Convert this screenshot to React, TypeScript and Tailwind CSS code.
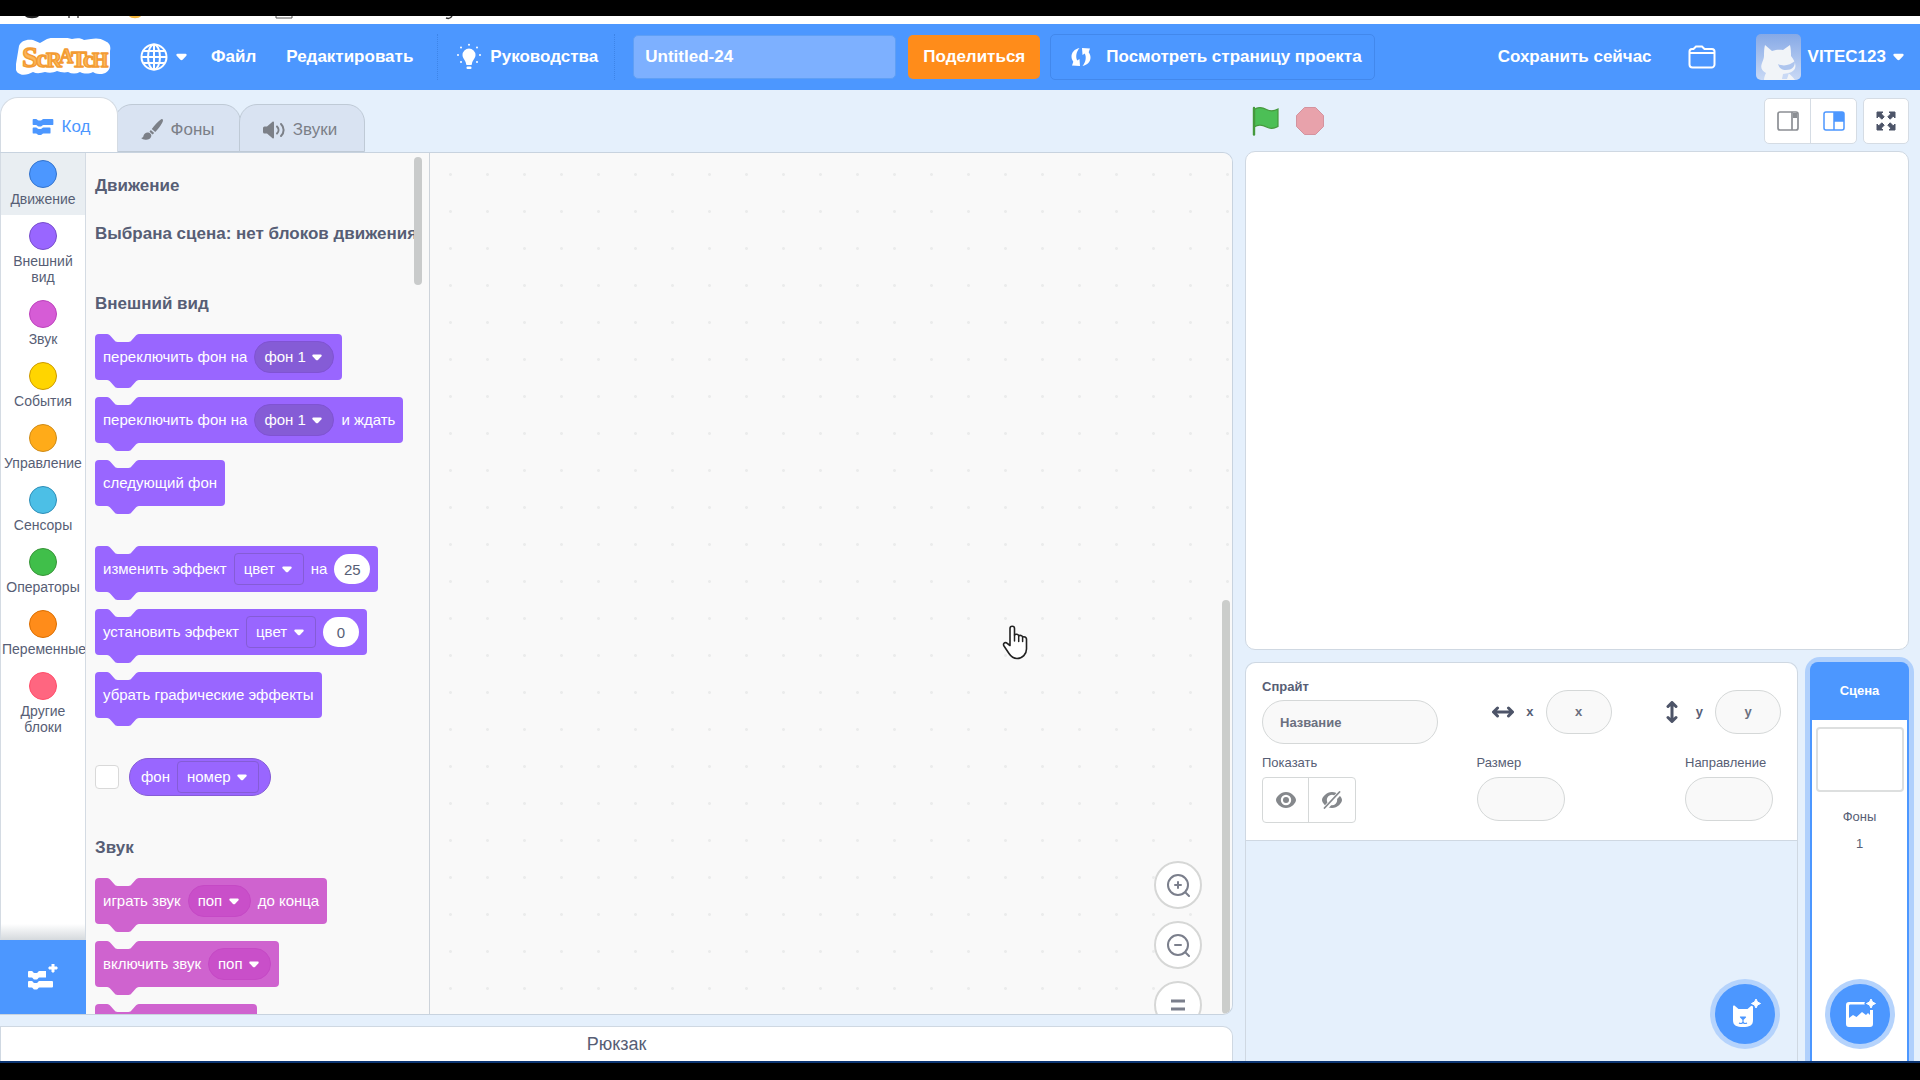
import type { ReactNode } from "react";

type Category = { name: string; color: string; active?: boolean };

const categories: Category[] = [
  { name: "Движение", color: "bg-[#4c97ff] border-[#3373cc]", active: true },
  { name: "Внешний вид", color: "bg-[#9966ff] border-[#774dcb]" },
  { name: "Звук", color: "bg-[#d65cd6] border-[#bd42bd]" },
  { name: "События", color: "bg-[#ffd500] border-[#cc9900]" },
  { name: "Управление", color: "bg-[#ffab19] border-[#cf8b17]" },
  { name: "Сенсоры", color: "bg-[#4cbfe6] border-[#2e8eb8]" },
  { name: "Операторы", color: "bg-[#40bf4a] border-[#389438]" },
  { name: "Переменные", color: "bg-[#ff8c1a] border-[#db6e00]" },
  { name: "Другие блоки", color: "bg-[#ff6680] border-[#ff4d6a]" },
];

const NOTCH = "M0 0c2 0 3 1 4 2l4 4c1 1 2 2 4 2h12c2 0 3-1 4-2l4-4c1-1 2-2 4-2z";

function Caret({ className }: { className?: string }) {
  return (
    <svg viewBox="0 0 12 8" className={className} fill="currentColor">
      <path d="M1.600.5h8.800c1.200 0 1.600 1.200.9 2L7.200 6.900c-.7.7-1.700.7-2.400 0L.7 2.500C0 1.700.400.500 1.600.5z" />
    </svg>
  );
}

function Block({ tone = "looks", children }: { tone?: "looks" | "sound"; children?: ReactNode }) {
  const looks = tone === "looks";
  return (
    <div
      className={
        "relative flex h-[46px] w-fit items-center gap-[7px] rounded px-2 text-[15px] text-white " +
        (looks ? "bg-[#9966ff]" : "bg-[#cf63cf]")
      }
    >
      <svg viewBox="0 0 36 8" className="absolute left-3 top-0 h-2 w-8 text-[#f9f9f9]" preserveAspectRatio="none">
        <path d={NOTCH} fill="currentColor" />
      </svg>
      <svg
        viewBox="0 0 36 8"
        className={"absolute left-3 top-full h-2 w-8 " + (looks ? "text-[#9966ff]" : "text-[#cf63cf]")}
        preserveAspectRatio="none"
      >
        <path d={NOTCH} fill="currentColor" />
      </svg>
      {children}
    </div>
  );
}

type MenuProps = { label: string; value: string; kind?: "round" | "square" | "sound" };

function Menu({ label, value, kind = "round" }: MenuProps) {
  const look = {
    round: "rounded-full bg-[#855cd6] border-[#8053d3]",
    square: "rounded bg-[#9966ff] border-[#855cd6]",
    sound: "rounded-full bg-[#c94fc9] border-[#c549c5]",
  }[kind];
  return (
    <span className="relative flex items-center">
      <select
        aria-label={label}
        className={"h-8 appearance-none border pl-[9px] pr-[27px] text-[15px] text-white outline-none " + look}
      >
        <option>{value}</option>
      </select>
      <Caret className="pointer-events-none absolute right-3 h-[7px] w-[10px]" />
    </span>
  );
}

function NumberField({ label, value }: { label: string; value: string }) {
  return (
    <input
      aria-label={label}
      defaultValue={value}
      className="h-[30px] w-9 rounded-full bg-white text-center text-[15px] text-[#575e75] outline-none"
    />
  );
}

function Header() {
  return (
    <header className="flex h-[66px] shrink-0 items-center bg-[#4c97ff] text-[17px] font-bold text-white">
      <svg viewBox="0 0 96 38" className="ml-4 h-[38px] w-24" aria-label="Scratch">
        <path
          d="M3 8C5 3 10 1 17 2l7 3 7-4c5-2 9-1 12-1 5-1 9 0 13 1 5-1 9-1 12 1l7-1c4-1 10-1 14 2 5 2 6 6 5 10v14c0 5-3 8-8 9-4 0-6 0-9-2-4 2-9 2-13 0-4 2-8 2-12 0-4 1-8 0-11-1-4 2-8 2-12 1-4 1-8 2-12 0-4 2-9 4-13 2-4-1-5-5-4-10z"
          fill="#fff"
        />
        <text
          y="29"
          fontFamily="'Liberation Serif', serif"
          fontWeight="700"
          fill="#fbb65a"
          stroke="#f39b32"
          strokeWidth="1.400"
          strokeLinejoin="round"
        >
          <tspan x="6" fontSize="29">S</tspan>
          <tspan x="20" fontSize="25">c</tspan>
          <tspan x="30" fontSize="22">R</tspan>
          <tspan x="43" y="25" fontSize="20">A</tspan>
          <tspan x="55" y="29" fontSize="24">T</tspan>
          <tspan x="67" fontSize="24">c</tspan>
          <tspan x="76" fontSize="21">H</tspan>
        </text>
      </svg>
      <button className="ml-7 flex items-center gap-2" aria-label="Язык">
        <svg viewBox="0 0 28 28" className="size-7" fill="none" stroke="currentColor" strokeWidth="2">
          <circle cx="14" cy="14" r="12.500" />
          <ellipse cx="14" cy="14" rx="6" ry="12.500" />
          <path d="M14 1.500v25M1.500 14h25M3.500 8h21M3.500 20h21" />
        </svg>
        <Caret className="h-2 w-[11px]" />
      </button>
      <button className="ml-6">Файл</button>
      <button className="ml-[30px]">Редактировать</button>
      <div className="ml-6 h-[46px] border-l border-dotted border-[#3d84e8]" />
      <button className="ml-[18px] flex items-center gap-2">
        <svg viewBox="0 0 26 28" className="h-7 w-[26px]" fill="currentColor">
          <path d="M13 5.500a6.500 6.500 0 0 0-6.500 6.500c0 3.500 3 5 3.500 8.500 0 1 .5 1.500 1.500 1.500h3c1 0 1.500-.5 1.500-1.500.5-3.500 3.500-5 3.500-8.500A6.500 6.500 0 0 0 13 5.500z" />
          <rect x="10.500" y="23.500" width="5" height="2.500" rx="1" />
          <circle cx="13" cy="1.800" r="1" />
          <circle cx="5" cy="4.500" r="1" />
          <circle cx="21" cy="4.500" r="1" />
          <circle cx="2" cy="12" r="1" />
          <circle cx="24" cy="12" r="1" />
          <circle cx="5" cy="19" r="1" />
          <circle cx="21" cy="19" r="1" />
        </svg>
        Руководства
      </button>
      <div className="ml-4 h-[46px] border-l border-dotted border-[#3d84e8]" />
      <input
        aria-label="Название проекта"
        defaultValue="Untitled-24"
        className="ml-[18px] h-11 w-[263px] rounded-[5px] border border-[#5f9ff5] bg-[#7db0ff] px-[11px] text-[17px] font-bold text-white outline-none"
      />
      <button className="ml-3 h-11 rounded-[5px] bg-[#ff8c1a] px-[15px]">Поделиться</button>
      <button className="ml-[10px] flex h-[46px] items-center gap-[15px] rounded-[5px] border border-[#4288ec] pl-5 pr-3">
        <svg viewBox="0 0 20 18" className="h-[18px] w-5" fill="currentColor">
          <path d="M8.500 0C3.500 1 .5 4.500.5 8.500c0 2 .7 3.700 1.800 5.200L1 17.500l8 .5-.5-7-2.300 1.500C4.500 9 5 4 8.500 0zM11.500 18c5-1 8-4.500 8-8.500 0-2-.7-3.700-1.800-5.200L19 .5 11 0l.5 7 2.300-1.500c1.700 3.500 1.200 8.500-2.300 12.500z" />
        </svg>
        Посмотреть страницу проекта
      </button>
      <button className="ml-auto">Сохранить сейчас</button>
      <button className="ml-9" aria-label="Мои работы">
        <svg viewBox="0 0 28 24" className="h-6 w-7" fill="none" stroke="currentColor" strokeWidth="2">
          <path d="M1.500 8h25v11.500a3 3 0 0 1-3 3h-19a3 3 0 0 1-3-3zM1.500 8V6.500c0-1.500 1-2.500 2.500-2.500h1.500L8 1.500h6L16.500 4H24c1.500 0 2.500 1 2.500 2.500V8" />
        </svg>
      </button>
      <button className="ml-10 mr-4 flex items-center gap-[7px]">
        <svg viewBox="0 0 45 46" className="h-[46px] w-[45px] rounded-[5px]">
          <defs>
            <linearGradient id="sky" x1="0" y1="0" x2="0" y2="1">
              <stop offset="0" stopColor="#86a9e6" />
              <stop offset="1" stopColor="#c9d9f5" />
            </linearGradient>
          </defs>
          <rect width="45" height="46" fill="url(#sky)" />
          <path
            d="M9 11l7 6c4-1.500 8-1.500 11-1l7-5c1 4 1 8 1 11 4 5 6 10 3 14-2 2-4 3-6 3 3 2 5 4 7 7H8c0-3 1-5 2-7-4-2-6-5-4-10 1-3 2-5 2-7 0-4 0-7 1-11z"
            fill="#f1f4f8"
          />
          <path d="M22 30c6 3 12 1 17-3 0 6-3 9-9 9-4 0-7-2-8-6z" fill="#aec5ee" />
          <path d="M27 40l6-1-2 6h-5z" fill="#c9d9f5" />
        </svg>
        VITEC123
        <Caret className="h-2 w-[11px]" />
      </button>
    </header>
  );
}

function CodeIcon({ className }: { className?: string }) {
  return (
    <svg viewBox="0 0 22 17" className={className} fill="currentColor">
      <path d="M1 0h2.500C5 0 5 1.500 6.500 1.500h2C10 1.500 10 0 11.500 0H21a1 1 0 0 1 1 1v4.500a1 1 0 0 1-1 1h-9.500C10 6.500 10 8 8.500 8h-2C5 8 5 6.500 3.500 6.500H1a1 1 0 0 1-1-1V1a1 1 0 0 1 1-1z" />
      <path d="M1 9h2.500C5 9 5 10.500 6.500 10.500h2C10 10.500 10 9 11.500 9H18a1 1 0 0 1 1 1v4.500a1 1 0 0 1-1 1h-6.500c-1.500 0-1.500 1.500-3 1.500h-2C5 17 5 15.500 3.500 15.500H1a1 1 0 0 1-1-1V10a1 1 0 0 1 1-1z" />
    </svg>
  );
}

function Tabs() {
  return (
    <div className="flex h-[55px] shrink-0 items-end text-[17px] text-[#7c8088]">
      <button className="z-10 flex h-[55px] w-[118px] items-center justify-center gap-2 rounded-t-[18px] border border-b-0 border-[#d4dbe3] bg-white pl-1 pt-[3px] text-[#4c97ff]">
        <CodeIcon className="h-4 w-[22px]" />
        Код
      </button>
      <button className="-ml-1 flex h-12 w-[127px] items-center justify-center gap-2 rounded-t-[18px] border border-[#bfcad6] bg-[#d9e3f2] pt-[3px]">
        <svg viewBox="0 0 22 21" className="h-[21px] w-[22px]" fill="#7c8088">
          <path d="M21.500.3c.8.700.500 2-.3 3.500-1.700 3.200-4.500 7-7 9.200L10.800 10C13.200 6.800 16.500 3 19.200 1c.9-.7 1.700-1.200 2.300-.7zM9.800 11l3.400 3-1.700 1.500-3-2.700zM7.500 13.500c2 .5 3.200 2 2.700 4-.7 2.700-3.500 3.500-6 3.200-1.600-.2-3-.7-4-1.700 1.500-.2 2-.8 2.300-2.200.5-2.300 2.700-3.800 5-3.300z" />
        </svg>
        Фоны
      </button>
      <button className="-ml-0.5 flex h-12 w-[126px] items-center justify-center gap-2 rounded-t-[18px] border border-[#bfcad6] bg-[#d9e3f2] pr-1 pt-[3px]">
        <svg viewBox="0 0 22 18" className="h-[18px] w-[22px]" fill="#7c8088">
          <path d="M1.500 5.500H4L9.500.7c.8-.6 1.500-.2 1.500.8v15c0 1-.7 1.400-1.500.8L4 12.500H1.500A1.500 1.500 0 0 1 0 11V7a1.500 1.500 0 0 1 1.500-1.500z" />
          <path d="M14 5.500c2 2 2 5 0 7M18 3c3.500 3.500 3.500 8.500 0 12" fill="none" stroke="#7c8088" strokeWidth="2" strokeLinecap="round" />
        </svg>
        Звуки
      </button>
    </div>
  );
}

function CategoryMenu() {
  return (
    <nav className="flex w-[86px] shrink-0 flex-col border-x border-[#d4dbe3] bg-white">
      <div className="min-h-0 flex-1 overflow-hidden">
        {categories.map((c) => (
          <button
            key={c.name}
            className={
              "block w-full overflow-hidden px-px pb-2 pt-[7px] text-center text-[14px] leading-4 text-[#575e75] " +
              (c.active ? "bg-[#e9eef2]" : "")
            }
          >
            <span className={"mx-auto mb-[3px] block size-7 rounded-full border " + c.color} />
            {c.name}
          </button>
        ))}
      </div>
      <div className="h-4 bg-linear-to-b from-white to-[#d5d9dd]" />
      <button aria-label="Добавить расширение" className="-mx-px flex h-[74px] items-center justify-center bg-[#4c97ff] text-white">
        <svg viewBox="0 0 30 26" className="h-[26px] w-[30px]" fill="currentColor">
          <path d="M1 7h2.500C5 7 5 9 6.500 9h2c1.500 0 1.500-2 3-2H18v6.500h-6.500c-1.500 0-1.500 2-3 2h-2c-1.500 0-1.500-2-3-2H1a1 1 0 0 1-1-1V8a1 1 0 0 1 1-1z" />
          <path d="M1 17h2.500C5 17 5 19 6.500 19h2c1.500 0 1.500-2 3-2H24a1 1 0 0 1 1 1v4.500a1 1 0 0 1-1 1H11.500c-1.500 0-1.500 2-3 2h-2c-1.500 0-1.500-2-3-2H1a1 1 0 0 1-1-1V18a1 1 0 0 1 1-1z" />
          <path d="M24 0h2v3h3v2h-3v3h-2V5h-3V3h3z" stroke="currentColor" strokeLinejoin="round" />
        </svg>
      </button>
    </nav>
  );
}

function Palette() {
  return (
    <div className="relative w-[344px] shrink-0 overflow-hidden border-r border-[#cdd3da] bg-[#f9f9f9] pl-[9px] text-[#575e75]">
      <h2 className="mt-[21px] text-[17px] font-bold leading-6">Движение</h2>
      <p className="mr-[6px] mt-6 overflow-hidden whitespace-nowrap text-[17px] font-bold leading-6">
        Выбрана сцена: нет блоков движения
      </p>
      <h2 className="mt-[46px] text-[17px] font-bold leading-6">Внешний вид</h2>
      <div className="mt-[18px] flex flex-col gap-[17px]">
        <Block>
          переключить фон на
          <Menu label="Фон" value="фон 1" />
        </Block>
        <Block>
          переключить фон на
          <Menu label="Фон" value="фон 1" />
          и ждать
        </Block>
        <Block>следующий фон</Block>
      </div>
      <div className="mt-10 flex flex-col gap-[17px]">
        <Block>
          изменить эффект
          <Menu label="Эффект" value="цвет" kind="square" />
          на
          <NumberField label="Изменить на" value="25" />
        </Block>
        <Block>
          установить эффект
          <Menu label="Эффект" value="цвет" kind="square" />
          <NumberField label="Значение" value="0" />
        </Block>
        <Block>убрать графические эффекты</Block>
      </div>
      <div className="mt-10 flex items-center gap-[10px]">
        <input
          type="checkbox"
          aria-label="Показать номер фона"
          className="size-6 appearance-none rounded border border-[#d9d9d9] bg-white"
        />
        <div className="flex h-[38px] items-center gap-[7px] rounded-full border border-[#855cd6] bg-[#9966ff] px-[11px] text-[15px] text-white">
          фон
          <Menu label="Свойство фона" value="номер" kind="square" />
        </div>
      </div>
      <h2 className="mt-10 text-[17px] font-bold leading-6">Звук</h2>
      <div className="mt-[18px] flex flex-col gap-[17px]">
        <Block tone="sound">
          играть звук
          <Menu label="Звук" value="поп" kind="sound" />
          до конца
        </Block>
        <Block tone="sound">
          включить звук
          <Menu label="Звук" value="поп" kind="sound" />
        </Block>
        <Block tone="sound">
          <span className="w-[146px]" />
        </Block>
      </div>
      <div className="absolute right-[7px] top-1 h-32 w-2 rounded-full bg-[#c9cbcb]" />
    </div>
  );
}

function ZoomButton({ label, children }: { label: string; children: ReactNode }) {
  return (
    <button
      aria-label={label}
      className="flex size-12 items-center justify-center rounded-full border-2 border-[#d6d7d6] bg-white text-[#7b7f8c]"
    >
      <svg viewBox="0 0 24 24" className="size-6" fill="none" stroke="currentColor" strokeWidth="2" strokeLinecap="round">
        {children}
      </svg>
    </button>
  );
}

function Workspace() {
  return (
    <div className="relative min-w-0 flex-1 overflow-hidden bg-[#f9f9f9] bg-[radial-gradient(circle,#ebecec_1px,transparent_2px)] bg-size-[37px_37px] [background-position:2px_3px]">
      <div className="absolute right-[30px] top-[708px] flex flex-col gap-3">
        <ZoomButton label="Увеличить">
          <circle cx="12" cy="12" r="10" />
          <path d="M19.500 19.500 23 23M12 9v6M9 12h6" />
        </ZoomButton>
        <ZoomButton label="Уменьшить">
          <circle cx="12" cy="12" r="10" />
          <path d="M19.500 19.500 23 23M9 12h6" />
        </ZoomButton>
        <ZoomButton label="Сбросить масштаб">
          <path d="M5 8h14M5 16h14" strokeLinecap="butt" strokeWidth="3" />
        </ZoomButton>
      </div>
      <div className="absolute bottom-0 right-[2px] h-[414px] w-2 rounded-full bg-[#cbcdcb]" />
      <svg viewBox="0 0 26 35" className="absolute left-[572px] top-[472px] h-[35px] w-[26px]">
        <path
          d="M8 20.500V3.500c0-3 4.500-3 4.500 0V10c1.200-1.300 3.800-.8 4.200.8 1.300-.9 3.500-.3 3.900 1.200 1.600-.7 3.600.2 3.900 2V24c0 5-4 9.500-9.500 9.500-3.500 0-6-2-8-5l-5-7.500c-1.300-2.300.500-4 2.500-3.200z"
          fill="#fff"
          stroke="#222"
          strokeWidth="1.600"
          strokeLinejoin="round"
        />
        <path d="M12.500 10v6M16.700 11v5.500M20.600 12.500v4" stroke="#222" strokeWidth="1.500" strokeLinecap="round" />
      </svg>
    </div>
  );
}

function StageHeader() {
  return (
    <div className="flex h-[61px] shrink-0 items-center pl-[7px]">
      <button aria-label="Старт">
        <svg viewBox="0 0 28 30" className="h-[30px] w-7">
          <path
            d="M2 3.500c5-3.500 9-2 12.500 0 3.500 1.800 7 2 11.500-.5v17.500c-4.500 2.500-8 2.500-11.500.5-3.500-2-7.500-3.500-12.500 0z"
            fill="#4cbf56"
            stroke="#45993d"
            strokeWidth="1.200"
          />
          <path d="M2 2v26.500" stroke="#45993d" strokeWidth="2.400" strokeLinecap="round" />
        </svg>
      </button>
      <button aria-label="Стоп" className="ml-4">
        <svg viewBox="0 0 28 28" className="size-7">
          <path d="M8.500.5h11l8 8v11l-8 8h-11l-8-8v-11z" fill="#e8a2ab" stroke="#d4939f" />
        </svg>
      </button>
      <div className="ml-auto flex rounded-[5px] border border-[#d5dce4] bg-white">
        <button aria-label="Маленькая сцена" className="flex h-11 w-[46px] items-center justify-center border-r border-[#d5dce4]">
          <svg viewBox="0 0 22 20" className="h-5 w-[22px]" fill="none" stroke="#8c8f94" strokeWidth="1.700">
            <rect x="1" y="1" width="20" height="18" rx="2" />
            <path d="M15 1v18" />
            <path d="M16 2h4v5h-4z" fill="#8c8f94" stroke="none" />
          </svg>
        </button>
        <button aria-label="Большая сцена" className="flex h-11 w-[45px] items-center justify-center">
          <svg viewBox="0 0 22 20" className="h-5 w-[22px]" fill="none" stroke="#4c97ff" strokeWidth="1.500">
            <rect x="1" y="1" width="20" height="18" rx="2" />
            <path d="M11 1v18M11 10h10" />
            <path d="M11 1h10v9H11z" fill="#4c97ff" stroke="none" />
          </svg>
        </button>
      </div>
      <button
        aria-label="На весь экран"
        className="ml-[6px] flex size-[46px] items-center justify-center rounded-[5px] border border-[#d5dce4] bg-white"
      >
        <svg viewBox="0 0 20 20" className="size-5" fill="#4d5468" stroke="#4d5468" strokeLinejoin="round">
          <path d="M1 1h6L5.200 2.800 8.200 5.800 5.800 8.200 2.800 5.200 1 7zM19 1h-6l1.800 1.800-3 3 2.400 2.400 3-3L19 7zM1 19h6l-1.800-1.800 3-3-2.400-2.400-3 3L1 13zM19 19h-6l1.800-1.800-3-3 2.400-2.400 3 3L19 13z" />
        </svg>
      </button>
    </div>
  );
}

const pill =
  "h-11 rounded-full border border-[#d5d8d8] bg-[#f9f9f9] text-center text-[13px] font-bold text-[#575e75] outline-none placeholder:text-[#6b7080]";

function SpriteInfo() {
  return (
    <div className="rounded-t-[10px] border-b border-[#cfd8e2] bg-white pb-[17px] pl-4 pr-4 pt-4 text-[13px] leading-4 text-[#575e75]">
      <div className="flex items-center justify-between">
        <label className="flex flex-col gap-[5px] font-bold">
          Спрайт
          <input placeholder="Название" className={pill + " w-[176px] px-[17px] text-left!"} />
        </label>
        <label className="flex items-center font-bold">
          <svg viewBox="0 0 22 12" className="mr-3 h-3 w-[22px]" fill="none" stroke="#4d5468" strokeWidth="3" strokeLinecap="round" strokeLinejoin="round">
            <path d="M2 6h18M5.500 2 1.500 6l4 4M16.500 2l4 4-4 4" />
          </svg>
          x
          <input placeholder="x" className={pill + " ml-3 w-[66px]"} />
        </label>
        <label className="flex items-center font-bold">
          <svg viewBox="0 0 12 22" className="mr-[18px] h-[22px] w-3" fill="none" stroke="#4d5468" strokeWidth="3" strokeLinecap="round" strokeLinejoin="round">
            <path d="M6 2v18M2 5.500l4-4 4 4M2 16.500l4 4 4-4" />
          </svg>
          y
          <input placeholder="y" className={pill + " ml-3 w-[66px]"} />
        </label>
      </div>
      <div className="mt-[11px] flex justify-between pr-2">
        <div className="flex flex-col gap-[6px]">
          Показать
          <div className="flex rounded border border-[#d5d8d8] text-[#85888c]">
            <button aria-label="Показать спрайт" className="flex h-11 w-[46px] items-center justify-center border-r border-[#d5d8d8]">
              <svg viewBox="0 0 20 16" className="h-4 w-5">
                <path d="M10 0C4.500 0 0 5 0 8s4.500 8 10 8 10-5 10-8-4.500-8-10-8zm0 2.800a5.200 5.200 0 1 1 0 10.400A5.200 5.200 0 0 1 10 2.800z" fill="currentColor" />
                <circle cx="10" cy="8" r="3" fill="currentColor" />
              </svg>
            </button>
            <button aria-label="Скрыть спрайт" className="flex h-11 w-[46px] items-center justify-center">
              <svg viewBox="0 0 20 18" className="h-[18px] w-5">
                <path d="M10 1C4.500 1 0 6 0 9s4.500 8 10 8 10-5 10-8-4.500-8-10-8zm0 2.800a5.200 5.200 0 1 1 0 10.400A5.200 5.200 0 0 1 10 3.800z" fill="currentColor" />
                <path d="M2.500 18 18.500 1" stroke="#fff" strokeWidth="4.500" />
                <path d="M2.500 17 17.500 1" stroke="currentColor" strokeWidth="1.800" strokeLinecap="round" />
              </svg>
            </button>
          </div>
        </div>
        <label className="flex flex-col gap-[6px]">
          Размер
          <input className={pill + " w-[88px]"} />
        </label>
        <label className="flex flex-col gap-[6px]">
          Направление
          <input className={pill + " w-[88px]"} />
        </label>
      </div>
    </div>
  );
}

function AddButton({ label, children }: { label: string; children: ReactNode }) {
  return (
    <button
      aria-label={label}
      className="flex size-[60px] items-center justify-center rounded-full bg-[#4c97ff] text-white shadow-[0_0_0_5px_#b5d3fc]"
    >
      <svg viewBox="0 0 32 32" className="size-8" fill="currentColor">
        {children}
        <path
          d="M27 1l1.500 3L31.500 5.500 28.500 7 27 10 25.500 7 22.500 5.500 25.500 4z"
          stroke="#4c97ff"
          strokeWidth="4"
          strokeLinejoin="round"
        />
        <path d="M27 1l1.500 3L31.500 5.500 28.500 7 27 10 25.500 7 22.500 5.500 25.500 4z" stroke="currentColor" strokeLinejoin="round" />
      </svg>
    </button>
  );
}

function Targets() {
  return (
    <div className="mt-3 flex min-h-0 flex-1 gap-3">
      <div className="relative flex-1 rounded-t-[10px] border border-b-0 border-[#cfd8e2] bg-[#e5f0fc]">
        <SpriteInfo />
        <div className="absolute bottom-[17px] right-[22px]">
          <AddButton label="Выбрать спрайт">
            <path d="M4 9c0-1.500 1-1.800 2-1l3.500 3h9L22 8c1-.8 2-.5 2 1v13c0 6-4 7-10 7S4 28 4 22z" />
            <path
              d="M11.500 19h5L14 21.500zM14 21.500v2.500M10 25c2 1 3.500.5 4-1 .5 1.500 2 2 4 1"
              fill="#4c97ff"
              stroke="#4c97ff"
              strokeWidth="1.200"
              strokeLinejoin="round"
            />
          </AddButton>
        </div>
      </div>
      <div className="relative flex w-[99px] shrink-0 flex-col items-center rounded-t-[10px] border-x-2 border-[#4c97ff] bg-white text-[13px] leading-4 text-[#575e75] shadow-[0_0_0_5px_#b0d0fc]">
        <h2 className="-mx-[2px] flex h-[58px] items-center justify-center self-stretch rounded-t-[8px] bg-[#4c97ff] font-bold text-white">
          Сцена
        </h2>
        <div className="mt-[7px] h-[65px] w-[88px] rounded border-2 border-[#dddfdf]" />
        <span className="mt-[17px]">Фоны</span>
        <span className="mt-[11px]">1</span>
        <div className="absolute bottom-[17px]">
          <AddButton label="Выбрать фон">
            <path d="M5 4h16v2.500H6.500C5.500 6.500 5 7 5 8v12l4-3 3.500 2L18 14l4 3 2-2 2 2v-5h3v14c0 2-1 3-3 3H5c-2 0-3-1-3-3V7c0-2 1-3 3-3z" />
          </AddButton>
        </div>
      </div>
    </div>
  );
}

export default function App() {
  return (
    <div className="flex h-screen flex-col overflow-hidden bg-[#e5f0fc] font-['Liberation_Sans',Arial,sans-serif]">
      <div className="h-4 shrink-0 bg-black" />
      <div className="h-2 shrink-0 bg-white">
        <svg viewBox="0 0 500 4" className="h-1 w-[500px]">
          <path d="M25 0h14c-2 3-12 3-14 0z" fill="#222" />
          <path d="M68 0h2v2h-2zM77 0h2v2h-2z" fill="#777" />
          <path d="M129 0h12c-2 3-10 3-12 0z" fill="#f5b63c" />
          <path d="M276 0v2h16V0" fill="none" stroke="#555" />
          <path d="M452 0c-1 2-3 3-6 2" fill="none" stroke="#333" strokeWidth="1.500" />
        </svg>
      </div>
      <Header />
      <main className="flex min-h-0 flex-1 gap-3 overflow-hidden pr-[11px]">
        <div className="flex min-w-0 flex-1 flex-col pt-[7px]">
          <Tabs />
          <div className="flex min-h-0 flex-1 overflow-hidden rounded-r-[10px] border border-l-0 border-[#c8d3df]">
            <CategoryMenu />
            <Palette />
            <Workspace />
          </div>
          <button className="mt-[11px] h-[35px] shrink-0 rounded-tr-[10px] border border-b-0 border-[#cfd8e2] bg-white text-[18px] text-[#575e75]">
            Рюкзак
          </button>
        </div>
        <div className="flex w-[664px] shrink-0 flex-col">
          <StageHeader />
          <div className="h-[499px] shrink-0 rounded-[10px] border border-[#cfd8e2] bg-white" />
          <Targets />
        </div>
      </main>
      <div className="h-[2px] shrink-0 bg-[#0c3572]" />
      <div className="h-[17px] shrink-0 bg-black" />
    </div>
  );
}
